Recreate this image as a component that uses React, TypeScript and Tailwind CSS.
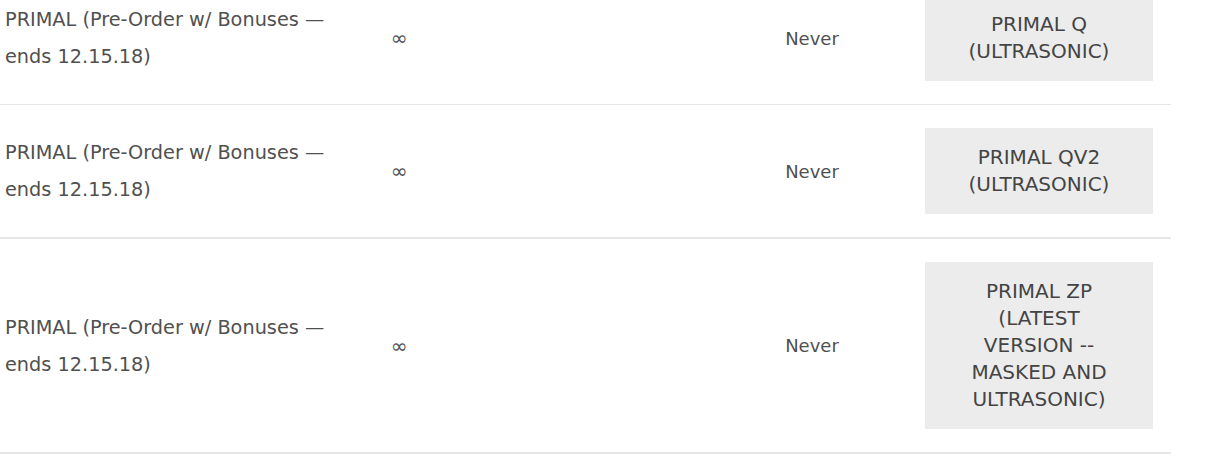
import React from "react";

const rows = [
  { sub: ["PRIMAL Q", "(ULTRASONIC)"] },
  { sub: ["PRIMAL QV2", "(ULTRASONIC)"] },
  { sub: ["PRIMAL ZP", "(LATEST", "VERSION --", "MASKED AND", "ULTRASONIC)"] },
];

export default function App() {
  return (
    <div className="w-[1223px] h-[458px] overflow-hidden bg-white" style={{ fontFamily: '"DejaVu Sans", "Noto Sans", sans-serif' }}>
      <div className="w-[1171px] -mt-[28px]">
        {rows.map((r, i) => (
          <div
            key={i}
            className={`grid grid-cols-[340px_118px_242px_224px_247px] items-center py-[23px] ${i === 0 ? "border-b border-[#e6e6e6]" : "border-b-2 border-[#e6e6e6]"}`}
          >
            <div className="pl-[5px] text-[19.3px] leading-[37px] text-[#505050]">
              PRIMAL (Pre-Order w/ Bonuses —<br />ends 12.15.18)
            </div>
            <div className="text-center text-[20px] leading-[24px] text-[#555]">∞</div>
            <div />
            <div className="text-center text-[18px] text-[#505050]">Never</div>
            <div className="pl-[1px]">
              <div className="w-[228px] bg-[#ececec] py-[16px] px-[8px] text-center text-[20px] leading-[27px] text-[#444]">
                {r.sub.map((s, j) => (
                  <div key={j}>{s}</div>
                ))}
              </div>
            </div>
          </div>
        ))}
      </div>
    </div>
  );
}
